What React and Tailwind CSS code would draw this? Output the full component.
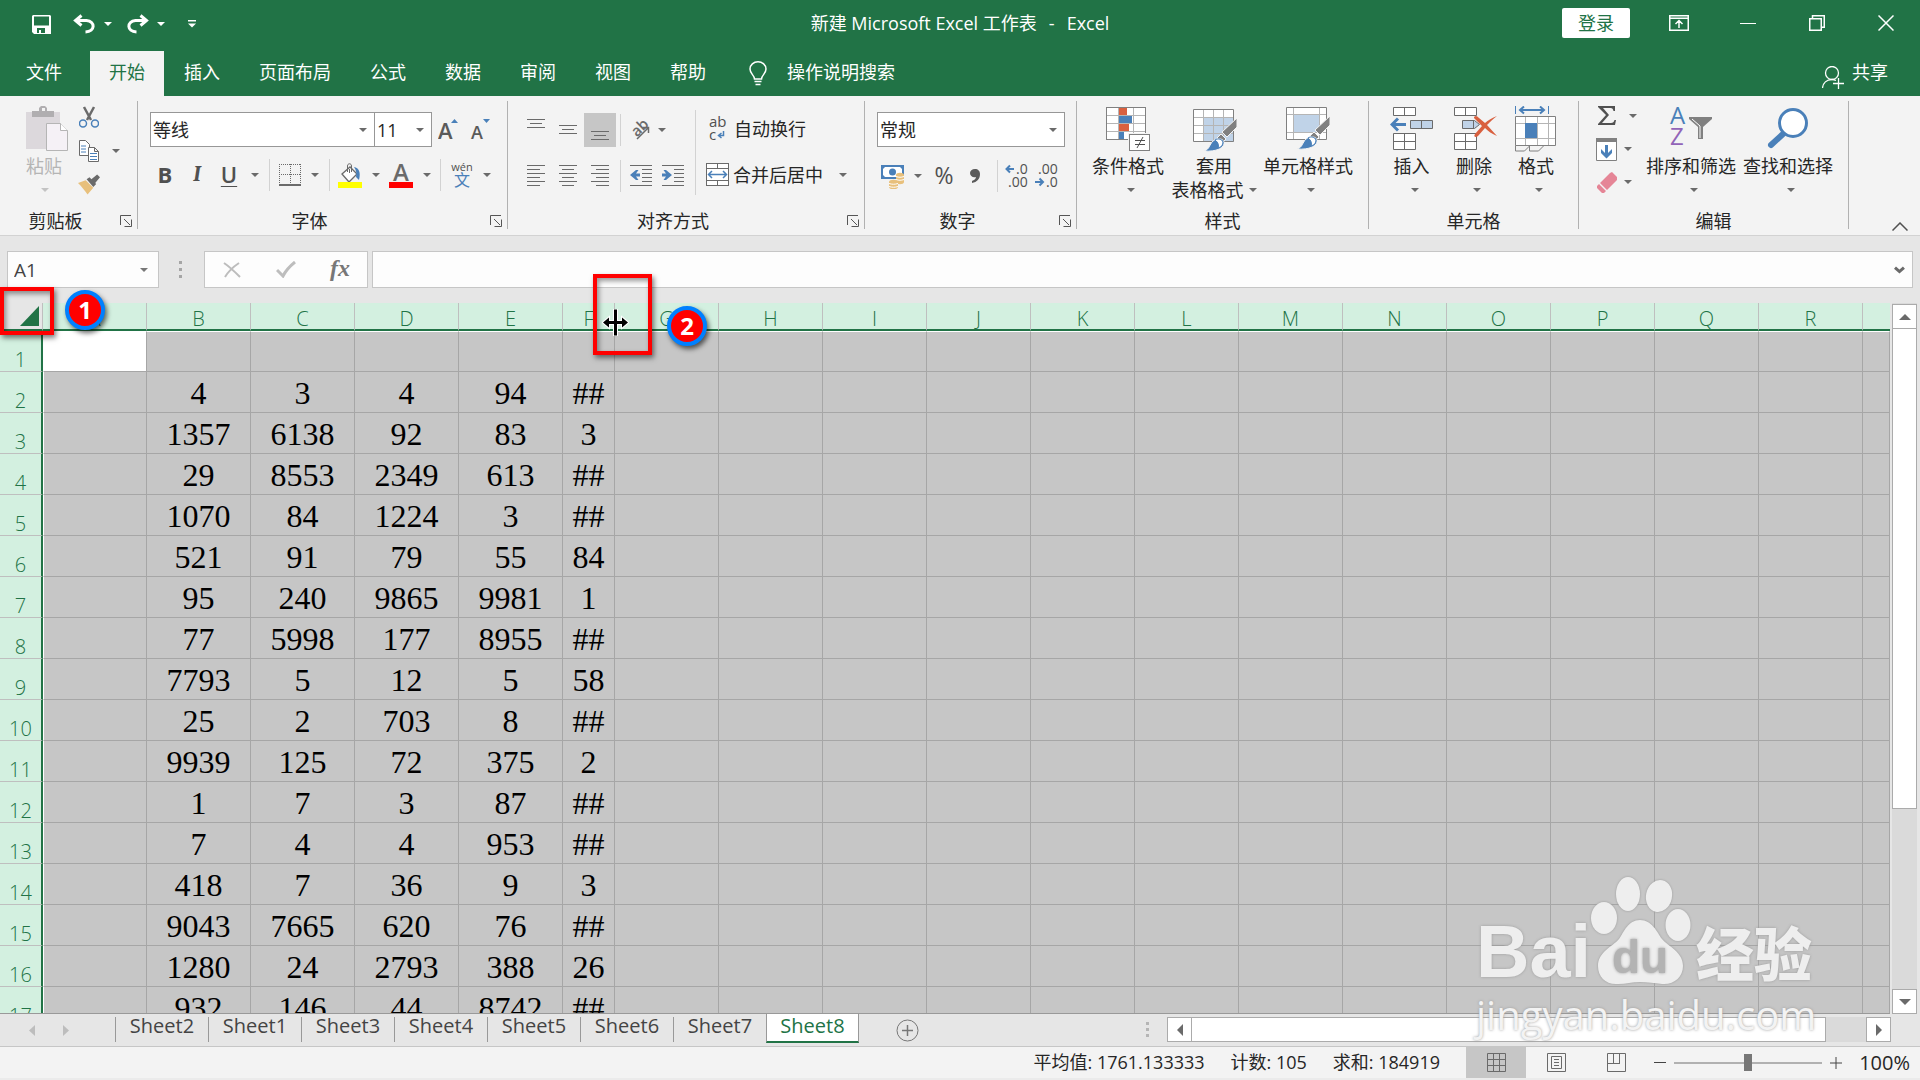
import React, { useState } from "react";
import clsx from "clsx";

const tabs = ["开始", "插入", "页面布局", "公式", "数据", "审阅", "视图", "帮助"];

const sheets = [
  "Sheet2",
  "Sheet1",
  "Sheet3",
  "Sheet4",
  "Sheet5",
  "Sheet6",
  "Sheet7",
  "Sheet8",
];

const columns = "ABCDEFGHIJKLMNOPQR".split("");

const rows = [
  [],
  ["4", "3", "4", "94", "##"],
  ["1357", "6138", "92", "83", "3"],
  ["29", "8553", "2349", "613", "##"],
  ["1070", "84", "1224", "3", "##"],
  ["521", "91", "79", "55", "84"],
  ["95", "240", "9865", "9981", "1"],
  ["77", "5998", "177", "8955", "##"],
  ["7793", "5", "12", "5", "58"],
  ["25", "2", "703", "8", "##"],
  ["9939", "125", "72", "375", "2"],
  ["1", "7", "3", "87", "##"],
  ["7", "4", "4", "953", "##"],
  ["418", "7", "36", "9", "3"],
  ["9043", "7665", "620", "76", "##"],
  ["1280", "24", "2793", "388", "26"],
  ["932", "146", "44", "8742", "##"],
];

const Arrow = ({ className = "text-[#6a6a6a]" }) => (
  <svg
    width="8"
    height="4"
    viewBox="0 0 8 4"
    fill="currentColor"
    className={clsx("shrink-0", className)}
  >
    <path d="M0 0h8L4 4z" />
  </svg>
);

const Tool = ({ label, className, children }) => (
  <button
    type="button"
    aria-label={label}
    className={clsx("flex shrink-0 items-center justify-center", className)}
  >
    {children}
  </button>
);

const Drop = ({ label, className = "w-5" }) => (
  <Tool label={label} className={clsx("h-8", className)}>
    <Arrow />
  </Tool>
);

const Divider = () => <span className="h-8 w-px shrink-0 bg-[#d2d2d2]" />;

const Group = ({ title, launcher, className, children }) => (
  <section
    className={clsx(
      "flex h-32 shrink-0 flex-col border-r border-[#b1b1b1]",
      className
    )}
  >
    <div className="flex min-h-0 flex-1">{children}</div>
    <div className="flex h-4 items-center">
      <h2 className="flex-1 text-center leading-4">{title}</h2>
      {launcher && (
        <Tool label={`${title}设置`} className="w-[26px] pl-1">
          <svg width="12" height="12" viewBox="0 0 12 12" fill="none" stroke="#555">
            <path d="M.5 10V.5H11M4 4l6 6M11.500 4.500v7h-7" />
          </svg>
        </Tool>
      )}
    </div>
  </section>
);

const BigButton = ({ icon, label, second, className }) => (
  <button
    type="button"
    className={clsx("flex shrink-0 flex-col items-center pt-[5px]", className)}
  >
    <span className="flex h-[46px] items-start justify-center">{icon}</span>
    <span className="mt-[2px] leading-6 whitespace-nowrap">{label}</span>
    <span
      className={clsx(
        "flex h-6 items-center gap-[5px] leading-6 whitespace-nowrap",
        !second && "pl-[6px]"
      )}
    >
      {second}
      <Arrow />
    </span>
  </button>
);

const Combo = ({ label, value, className }) => (
  <label
    className={clsx(
      "relative flex h-[35px] items-center border border-[#979797] bg-white",
      className
    )}
  >
    <span className="sr-only">{label}</span>
    <select className="h-full w-full appearance-none bg-transparent pl-[2px] outline-none">
      <option>{value}</option>
    </select>
    <Arrow className="pointer-events-none absolute right-[7px] text-[#6a6a6a]" />
  </label>
);

// horizontal rules, each one [x1, x2, y]
const Lines = ({ lines, width = 20, height = 24, children }) => (
  <svg
    width={width}
    height={height}
    viewBox={`0 0 ${width} ${height}`}
    shapeRendering="crispEdges"
    stroke="#6a6a6a"
    fill="none"
  >
    {lines.map(([a, b, y]) => (
      <path key={`${a}-${y}`} d={`M${a} ${y}.5H${b}`} />
    ))}
    {children}
  </svg>
);

const leftLines = [[1, 19, 1], [1, 14, 5], [1, 19, 9], [1, 14, 13], [1, 19, 17], [1, 14, 21]];
const centerLines = [[1, 19, 1], [4, 16, 5], [1, 19, 9], [4, 16, 13], [1, 19, 17], [4, 16, 21]];
const rightLines = [[1, 19, 1], [6, 19, 5], [1, 19, 9], [6, 19, 13], [1, 19, 17], [6, 19, 21]];
const indentLines = [[0, 22, 1], [12, 22, 5], [12, 22, 9], [12, 22, 13], [12, 22, 17], [0, 22, 21]];

const Brush = () => (
  <>
    <path d="M44 9v9L34 28l-5-5z" fill="#808080" stroke="#f3f3f3" />
    <path d="M28 25l5 5-4 4-5-5z" fill="#808080" stroke="#f3f3f3" />
    <path
      d="M11 42c6-2 5-6 9-10 4-3 10-3 11 1 1 6-8 10-20 9z"
      fill="#4a80b9"
      stroke="#f3f3f3"
    />
    <path d="M22 31c3-2 7-1 8 2 0 3-2 5-4 6-1-3 0-5-4-8z" fill="#fff" stroke="#4a80b9" />
  </>
);

const TitleBar = () => (
  <header className="grid h-[51px] grid-cols-[1fr_auto_1fr] text-white">
    <div className="flex h-12 items-center pl-8">
      <Tool label="保存">
        <svg width="19" height="19" viewBox="0 0 19 19" fill="currentColor">
          <path
            fillRule="evenodd"
            d="M0 1l1-1h17l1 1v18H2l-2-2zM2 1.500v9h15v-9zM5 13v5h8v-5zM7 15h2v3H7z"
          />
        </svg>
      </Tool>
      <Tool label="撤消" className="ml-[22px]">
        <svg width="23" height="20" viewBox="0 0 23 20" fill="none" stroke="currentColor" strokeWidth="3">
          <path d="M8.500 1.500 2.500 6.500l6 5M3 6.500h10.500c9 1 9 11-1 11.500" />
        </svg>
      </Tool>
      <Tool label="撤消列表" className="w-6">
        <Arrow className="text-white" />
      </Tool>
      <Tool label="恢复" className="ml-[6px]">
        <svg width="23" height="20" viewBox="0 0 23 20" fill="none" stroke="currentColor" strokeWidth="3">
          <path d="M14.500 1.500l6 5-6 5M20 6.500H9.500c-9 1-9 11 1 11.500" />
        </svg>
      </Tool>
      <Tool label="恢复列表" className="w-6">
        <Arrow className="text-white" />
      </Tool>
      <Tool label="自定义快速访问工具栏" className="ml-[15px]">
        <svg width="8" height="8" viewBox="0 0 8 8" fill="currentColor">
          <path d="M0 0h8v1.500H0zM0 3.500h8L4 7.500z" />
        </svg>
      </Tool>
    </div>
    <h1 className="flex h-12 items-center gap-3 pb-[2px]">
      <span>新建 Microsoft Excel 工作表</span>
      <span>-</span>
      <span>Excel</span>
    </h1>
    <div className="flex h-[46px] items-center justify-end">
      <button
        type="button"
        className="mr-[14px] h-[30px] w-[68px] rounded-xs bg-white text-[#217346]"
      >
        登录
      </button>
      <Tool label="功能区显示选项" className="h-full w-[69px]">
        <svg width="20" height="16" viewBox="0 0 20 16" fill="none" stroke="currentColor" strokeWidth="1.500">
          <path d="M.75.75h18.500v14.500H.75zM1 3.250h18M10 13V6M6.500 9 10 5.500 13.500 9" />
        </svg>
      </Tool>
      <Tool label="最小化" className="h-full w-[69px]">
        <span className="h-px w-4 bg-white" />
      </Tool>
      <Tool label="还原" className="h-full w-[69px]">
        <svg width="16" height="16" viewBox="0 0 16 16" fill="none" stroke="currentColor" strokeWidth="1.500">
          <path d="M.75 3.750h11.500v11.500H.75zM3.500 3.500V.75h11.750v11.500H12.500" />
        </svg>
      </Tool>
      <Tool label="关闭" className="h-full w-[69px]">
        <svg width="16" height="16" viewBox="0 0 16 16" fill="none" stroke="currentColor" strokeWidth="1.500">
          <path d="M.5.5l15 15M15.500.5l-15 15" />
        </svg>
      </Tool>
    </div>
  </header>
);

const TabBar = () => (
  <nav className="flex h-[45px] items-stretch gap-px pr-8 text-white">
    <button type="button" className="pr-[27px] pb-1 pl-[26px]">
      文件
    </button>
    {tabs.map((t, i) => (
      <button
        key={t}
        type="button"
        className={clsx("px-[19px] pb-1", i === 0 && "bg-[#f3f3f3] text-[#217346]")}
      >
        {t}
      </button>
    ))}
    <label className="ml-[23px] flex flex-1 items-center gap-5">
      <svg width="18" height="25" viewBox="0 0 18 25" fill="none" stroke="currentColor" strokeWidth="1.500">
        <path d="M5.500 18c0-4-4.500-5-4.500-10a8 7.250 0 0 1 16 0c0 5-4.500 6-4.500 10zM5.500 20.500h7M6.500 23.500h5" />
      </svg>
      <input
        aria-label="操作说明搜索"
        placeholder="操作说明搜索"
        className="w-48 bg-transparent pb-1 outline-none placeholder:text-white"
      />
    </label>
    <button type="button" className="flex items-center gap-2">
      <svg width="22" height="23" viewBox="0 0 22 23" fill="none" stroke="currentColor" strokeWidth="1.300" className="mt-2">
        <circle cx="10" cy="7" r="6.500" />
        <path d="M.5 22c.5-5 4-8.500 9.500-8.500 2 0 3 .5 4 1M16.500 12v11M11 17.500h11" />
      </svg>
      <span className="pb-1">共享</span>
    </button>
  </nav>
);

const Clipboard = () => (
  <Group title="剪贴板" launcher className="w-[138px]">
    <button type="button" className="ml-6 flex w-[42px] flex-col items-center pt-[5px] text-[#b5b5b5]">
      <svg width="42" height="46" viewBox="0 0 42 46" className="ml-1">
        <path d="M0 6h34v37H0z" fill="#dcd8dc" />
        <path d="M6 11V5h7V2l2-2h4l2 2v3h7v6zM16 2v3h3V2z" fill="#b0aeb0" />
        <path d="M20.500 17.500h14l7 7v20h-21z" fill="#f5f1f6" stroke="#b5b5b5" />
        <path d="M34.500 17.500v7h7" fill="#fff" stroke="#b5b5b5" />
      </svg>
      <span className="mt-[2px] pr-[2px] leading-6">粘贴</span>
      <span className="flex h-6 items-center">
        <Arrow className="text-[#c3c3c3]" />
      </span>
    </button>
    <div className="ml-3 flex flex-col gap-3 pt-[5px]">
      <Tool label="剪切" className="w-[22px]">
        <svg width="20" height="22" viewBox="0 0 20 22" fill="none">
          <path d="M5 1l7 13M15 1L8 14" stroke="#6a6a6a" strokeWidth="2.500" />
          <circle cx="4" cy="17.500" r="3.500" stroke="#4a80b9" strokeWidth="1.500" />
          <circle cx="16" cy="17.500" r="3.500" stroke="#4a80b9" strokeWidth="1.500" />
        </svg>
      </Tool>
      <div className="flex items-center">
        <Tool label="复制" className="w-[22px]">
          <svg width="20" height="22" viewBox="0 0 20 22" fill="#fff" stroke="#6a6a6a">
            <path d="M.5.5h6l4 4v11H.5z" />
            <path d="M2 6h5M2 9h5M2 12h5" stroke="#4a80b9" />
            <path d="M9.500 7.500h6l4 4v10h-10zM15.500 7.500v4h4" />
            <path d="M11 13.500h7M11 16.500h7M11 19.500h7" stroke="#4a80b9" />
          </svg>
        </Tool>
        <Tool label="复制选项" className="ml-[6px] w-5">
          <Arrow />
        </Tool>
      </div>
      <Tool label="格式刷" className="w-[22px]">
        <svg width="23" height="21" viewBox="0 0 23 21">
          <path d="M0 9l8-3 8 8-6 7c-3-4-6-8-10-12z" fill="#e8c07c" />
          <path d="M9 5l3-2 7 7-3 3zM14 5l6-5 3 3-5 6z" fill="#6a6a6a" />
        </svg>
      </Tool>
    </div>
  </Group>
);

const FontGroup = () => (
  <Group title="字体" launcher className="w-[370px]">
    <div className="flex flex-col gap-3 pt-[11px] pl-[11px]">
      <div className="flex pl-px">
        <Combo label="字体" value="等线" className="w-[225px]" />
        <Combo label="字号" value="11" className="-ml-px w-[58px]" />
        <Tool label="增大字号" className="ml-[6px] w-5">
          <svg width="20" height="24" viewBox="0 0 20 24">
            <text x="0" y="21" fontSize="22" fontWeight="600" fill="#5a5a5a">A</text>
            <path d="M13 5l3.500-4L20 5z" fill="#4a80b9" />
          </svg>
        </Tool>
        <Tool label="减小字号" className="ml-3 w-5">
          <svg width="20" height="24" viewBox="0 0 20 24">
            <text x="1" y="21" fontSize="18" fontWeight="600" fill="#5a5a5a">A</text>
            <path d="M13 1h7l-3.500 4z" fill="#4a80b9" />
          </svg>
        </Tool>
      </div>
      <div className="flex items-center text-[22px] text-[#505050]">
        <Tool label="加粗" className="h-8 w-8 pb-[2px] font-bold">B</Tool>
        <Tool label="倾斜" className="h-8 w-8 pb-[2px] font-serif font-bold italic">I</Tool>
        <Tool label="下划线" className="h-8 w-8 pb-[2px] font-semibold underline decoration-1 underline-offset-3">U</Tool>
        <Drop label="下划线选项" />
        <span className="w-1" />
        <Divider />
        <Tool label="边框" className="ml-2 w-[23px]">
          <svg width="22" height="22" viewBox="0 0 22 22" fill="none" stroke="#6a6a6a" shapeRendering="crispEdges">
            <path d="M.5 0v21M21.500 0v21M11.500 0v21M0 .5h22M0 10.500h22" strokeDasharray="1 1" />
            <path d="M0 21h22" strokeWidth="2" />
          </svg>
        </Tool>
        <Drop label="边框选项" className="w-7" />
        <Divider />
        <Tool label="填充颜色" className="ml-2 w-6">
          <svg width="24" height="25" viewBox="0 0 24 25">
            <path d="M4 11l8-7 7 7-8 8z" fill="#fff" stroke="#6a6a6a" strokeWidth="1.300" />
            <path d="M9.500 9V3c0-3 4-3 4 0v6M11.500 6v4" fill="none" stroke="#6a6a6a" />
            <path d="M16 4c5 1 7 5 5 13l-3-3c1-4 0-7-2-10z" fill="#4a80b9" />
            <path d="M0 19h24v6H0z" fill="#ff0" />
          </svg>
        </Tool>
        <Drop label="填充颜色选项" className="w-[27px]" />
        <Tool label="字体颜色" className="w-6">
          <svg width="24" height="25" viewBox="0 0 24 25">
            <text x="4" y="18" fontSize="24" fontWeight="600" fill="#6a6a6a">A</text>
            <path d="M0 19h24v6H0z" fill="#f00" />
          </svg>
        </Tool>
        <Drop label="字体颜色选项" className="w-[27px]" />
        <Divider />
        <Tool label="拼音" className="ml-2 w-[26px]">
          <svg width="24" height="26" viewBox="0 0 24 26" textAnchor="middle">
            <text x="12" y="9" fontSize="11" fill="#505050">wén</text>
            <text x="12" y="24" fontSize="16" fill="#4a80b9">文</text>
          </svg>
        </Tool>
        <Drop label="拼音选项" className="w-6" />
      </div>
    </div>
  </Group>
);

const AlignGroup = () => (
  <Group title="对齐方式" launcher className="w-[357px]">
    <div className="flex w-[187px] flex-col gap-3 pt-3 pl-3">
      <div className="flex h-[34px] items-center">
        <Tool label="顶端对齐" className="h-full w-8">
          <Lines lines={[[1, 19, 1], [4, 16, 5], [1, 19, 9]]} />
        </Tool>
        <Tool label="垂直居中" className="h-full w-8">
          <Lines lines={[[1, 19, 7], [4, 16, 11], [1, 19, 15]]} />
        </Tool>
        <Tool label="底端对齐" className="h-full w-8 bg-[#c6c6c6]">
          <Lines lines={[[1, 19, 13], [4, 16, 17], [1, 19, 21]]} />
        </Tool>
        <span className="w-1" />
        <Divider />
        <Tool label="方向" className="ml-2 w-[22px]">
          <svg width="22" height="22" viewBox="0 0 22 22" fill="none" stroke="#6a6a6a" strokeWidth="1.500">
            <text x="-9" y="6" fontSize="15" fontWeight="600" fill="#6a6a6a" stroke="none" transform="translate(10 8) rotate(-45)">ab</text>
            <path d="M8 20 19 9M14 8.500h5.500V14" />
          </svg>
        </Tool>
        <Drop label="方向选项" className="w-[22px]" />
      </div>
      <div className="flex h-[34px] items-center">
        <Tool label="左对齐" className="h-full w-8"><Lines lines={leftLines} /></Tool>
        <Tool label="居中" className="h-full w-8"><Lines lines={centerLines} /></Tool>
        <Tool label="右对齐" className="h-full w-8"><Lines lines={rightLines} /></Tool>
        <span className="w-1" />
        <Divider />
        <Tool label="减少缩进量" className="ml-1 h-full w-8">
          <Lines width={22} lines={indentLines}>
            <path d="M0 11l6-5h2.500L6 9.500h4v3H6L8.500 16H6z" fill="#4a80b9" stroke="none" shapeRendering="auto" />
          </Lines>
        </Tool>
        <Tool label="增加缩进量" className="h-full w-8">
          <Lines width={22} lines={indentLines}>
            <path d="M10 11L4 6H1.500L4 9.500H0v3h4L1.500 16H4z" fill="#4a80b9" stroke="none" shapeRendering="auto" />
          </Lines>
        </Tool>
      </div>
    </div>
    <span className="mt-[9px] h-[85px] w-px bg-[#d2d2d2]" />
    <div className="flex flex-col gap-3 pt-[11px] pl-[10px]">
      <button type="button" className="flex h-[34px] items-center gap-[2px] pl-[3px]">
        <svg width="23" height="26" viewBox="0 0 23 26" fill="#505050">
          <text x="0" y="11" fontSize="15">ab</text>
          <text x="0" y="24" fontSize="15">c</text>
          <path d="M14.500 15v4.500H10M12.500 17l-3 2.500 3 2.500" fill="none" stroke="#4a80b9" strokeWidth="1.500" />
        </svg>
        自动换行
      </button>
      <div className="flex h-[34px] items-center">
        <button type="button" className="flex items-center gap-1">
          <svg width="23" height="24" viewBox="0 0 23 24" fill="#fff" stroke="#6a6a6a">
            <path d="M.5.5h22v22H.5zM.5 5.500h22M.5 17.500h22M11.500 0v5M11.500 18v5" shapeRendering="crispEdges" />
            <path d="M3 11.500h17M6 8l-3.500 3.500L6 15M17 8l3.500 3.500L17 15" stroke="#4a80b9" strokeWidth="1.500" fill="none" />
          </svg>
          合并后居中
        </button>
        <Drop label="合并选项" className="ml-[10px] w-5" />
      </div>
    </div>
  </Group>
);

const NumberGroup = () => (
  <Group title="数字" launcher className="w-[212px]">
    <div className="flex flex-col gap-3 pt-[11px] pl-3">
      <Combo label="数字格式" value="常规" className="w-[188px]" />
      <div className="flex h-[34px] items-center pl-1 text-[#505050]">
        <Tool label="会计数字格式" className="w-6">
          <svg width="24" height="25" viewBox="0 0 24 25">
            <path d="M0 1h23v14H0z" fill="#4a80b9" />
            <path d="M2 5l2-2h15l2 2v6l-2 2H4l-2-2z" fill="#fff" />
            <circle cx="11.500" cy="8" r="3.500" fill="#4a80b9" />
            <path d="M15 11c0-3 8-3 8 0v7c0 3-8 3-8 0zM8 18c0-3 9-3 9 0v5c0 3-9 3-9 0z" fill="#e8c07c" />
            <path d="M15 12.500c3 1 5 1 8 0M15 15.500c3 1 5 1 8 0M8 19.500c3 1 6 1 9 0M8 22.500c3 1 6 1 9 0" stroke="#fff" fill="none" />
          </svg>
        </Tool>
        <Drop label="会计数字格式选项" className="w-[26px]" />
        <Tool label="百分比样式" className="w-[26px] pb-[2px] text-[23px]">%</Tool>
        <Tool label="千位分隔样式" className="mr-1 w-9">
          <svg width="10" height="14" viewBox="0 0 10 14" fill="#5a5a5a">
            <path d="M5 0c3 0 5 2 5 5 0 5-3 8-8 9v-2c2-1 4-2 4-4-3 1-6-1-6-4 0-2 2-4 5-4z" />
          </svg>
        </Tool>
        <Divider />
        <Tool label="增加小数位数" className="ml-[6px] w-7">
          <svg width="26" height="26" viewBox="0 0 26 26" fill="#505050" fontSize="14">
            <text x="11" y="11">.0</text>
            <text x="3" y="24">.00</text>
            <path d="M9 6H2M5 2.500L1.500 6 5 9.500" fill="none" stroke="#4a80b9" strokeWidth="2" />
          </svg>
        </Tool>
        <Tool label="减少小数位数" className="w-8">
          <svg width="26" height="26" viewBox="0 0 26 26" fill="#505050" fontSize="14">
            <text x="3" y="11">.00</text>
            <text x="11" y="24">.0</text>
            <path d="M0 19h7M4.500 15.500L8 19l-3.500 3.500" fill="none" stroke="#4a80b9" strokeWidth="2" />
          </svg>
        </Tool>
      </div>
    </div>
  </Group>
);

const StyleGroup = () => (
  <Group title="样式" className="w-[292px]">
    <BigButton
      label="条件格式"
      className="ml-2 w-[86px]"
      icon={
        <svg width="44" height="46" viewBox="0 0 44 46" fill="#fff" shapeRendering="crispEdges">
          <path d="M0.500 1.500h39v32h-39z" />
          <path d="M12.500 1v33M27.500 1v33M0 9.500h40M0 17.500h40M0 25.500h40" stroke="#b5b5b5" />
          <path d="M.5 1.500h39v32H.5z" fill="none" stroke="#808080" />
          <path d="M13 2h8v7h-8zM13 18h10v7H13z" fill="#d9603f" />
          <path d="M13 10h13v7H13zM13 26h5v7h-5z" fill="#4a80b9" />
          <path d="M22 27h22v19H22z" fill="#f3f3f3" />
          <path d="M23.500 28.500h20v16h-20z" stroke="#808080" />
          <path d="M29 34.500h10M29 38.500h10M37 31l-6 11" stroke="#505050" shapeRendering="auto" />
        </svg>
      }
    />
    <BigButton
      label={<span>套用</span>}
      second="表格格式"
      className="w-[86px]"
      icon={
        <svg width="46" height="46" viewBox="0 -3 46 46" fill="#fff" className="ml-1">
          <path d="M.5.5h40v32H.5z" />
          <path d="M10 8h31v25H10z" fill="#c0d3e8" />
          <path d="M10.500 0v33M20.500 0v33M30.500 0v33M0 8.500h41M0 16.500h41M0 24.500h41" stroke="#b5b5b5" />
          <path d="M.5.5h40v32H.5z" fill="none" stroke="#808080" />
          <Brush />
        </svg>
      }
    />
    <BigButton
      label="单元格样式"
      className="ml-[3px] w-24"
      icon={
        <svg width="46" height="46" viewBox="0 -1 46 46" fill="#fff" className="ml-[2px]">
          <path d="M.5.5h40v32H.5z" />
          <path d="M8 7h26v19H8z" fill="#c0d3e8" />
          <path d="M7.500 0v33M33.500 0v33M0 7.500h41M0 25.500h41" stroke="#b5b5b5" />
          <path d="M.5.5h40v32H.5z" fill="none" stroke="#808080" />
          <Brush />
        </svg>
      }
    />
  </Group>
);

const CellGroup = () => (
  <Group title="单元格" className="w-[210px]">
    <BigButton
      label="插入"
      className="ml-[11px] w-[63px]"
      icon={
        <svg width="44" height="46" viewBox="0 -1 44 46" fill="#fff" stroke="#6a6a6a">
          <path d="M3.500.5h22v8h-22zM14.500.5v8M3.500 26.500h22v16h-22zM3.500 34.500h22M14.500 26.500v16" />
          <path d="M20.500 13.500h22v8h-22zM31.500 13.500v8" fill="#c0d3e8" />
          <path d="M16 17.500H2M8 11.500l-6 6 6 6" fill="none" stroke="#4a80b9" strokeWidth="3" />
        </svg>
      }
    />
    <BigButton
      label="删除"
      className="w-[62px]"
      icon={
        <svg width="44" height="46" viewBox="0 -1 44 46" fill="#fff" stroke="#6a6a6a" className="ml-1">
          <path d="M.5.5h22v8H.5zM11.500.5v8M.5 26.500h22v16H.5zM.5 34.500h22M11.500 26.500v16" />
          <path d="M8.500 13.500h12l5 4-5 4h-12zM19.500 13.500v8" fill="#c0d3e8" />
          <path d="M20 10c2-2 3-1 5 1l6 5c3-3 7-5 12-7-4 3-7 6-10 9l10 11c-5-2-9-5-12-8l-7 8c-2 2-5 1-3-2l7-8-7-7c-1-1-1-1-1-2z" fill="#d9603f" stroke="none" />
        </svg>
      }
    />
    <BigButton
      label="格式"
      className="w-[62px]"
      icon={
        <svg width="42" height="46" viewBox="0 0 42 46" fill="#fff">
          <path d="M.5 10.500h40v29H.5z" />
          <path d="M10.500 10v30M22.500 10v30M33.500 10v30M0 17.500h41M0 32.500h41" stroke="#b5b5b5" />
          <path d="M.5 39.500v5.500h9l5-5M14.500 40v5h9l5-5M.5 10.500h40v29H.5z" fill="none" stroke="#808080" />
          <path d="M10 17h12v15H10z" fill="#4a80b9" />
          <path d="M.5 0v8M33.500 0v8" stroke="#4a80b9" />
          <path d="M5 4h24M9 .5L5 4l4 3.500M25 .5L29 4l-4 3.500" stroke="#4a80b9" strokeWidth="2" fill="none" />
        </svg>
      }
    />
  </Group>
);

const EditGroup = () => (
  <Group title="编辑" className="w-[270px]">
    <div className="ml-[17px] flex w-[46px] flex-col gap-[10px] pt-1">
      <div className="flex h-[22px] items-center justify-between">
        <Tool label="自动求和">
          <svg width="22" height="20" viewBox="-2 0 22 20" fill="#505050">
            <path d="M0 0h17v5h-1.500c-.5-2-1-3-3-3H5l6 7-7 8h9c2 0 3-1 3.500-3H18l-1 5H0v-1l8-9-8-8z" />
          </svg>
        </Tool>
        <Tool label="求和选项" className="w-[18px]"><Arrow /></Tool>
      </div>
      <div className="flex h-6 items-center gap-[2px]">
        <Tool label="填充">
          <svg width="22" height="23" viewBox="0 0 22 23">
            <path d="M.5.5h20v22H.5z" fill="#fff" stroke="#808080" />
            <path d="M0 0h21v4H0z" fill="#808080" />
            <path d="M9 7h3v8l4-4v4l-5.500 5.500L5 15v-4l4 4z" fill="#4a80b9" />
          </svg>
        </Tool>
        <Tool label="填充选项" className="w-4"><Arrow /></Tool>
      </div>
      <div className="flex h-[22px] items-center gap-[2px]">
        <Tool label="清除">
          <svg width="22" height="21" viewBox="0 0 22 21" fill="#e58596">
            <path d="M4 11L14 1l2-1 5 5v3L11 18zM3 12l7 7-2 2H6l-5-5v-2z" />
          </svg>
        </Tool>
        <Tool label="清除选项" className="w-4"><Arrow /></Tool>
      </div>
    </div>
    <BigButton
      label="排序和筛选"
      className="w-[98px]"
      icon={
        <svg width="44" height="46" viewBox="0 0 44 46" fontSize="24">
          <text x="1" y="18" fill="#4a80b9">A</text>
          <text x="1" y="39" fill="#9264b8">Z</text>
          <path d="M20 11h23v2l-9 8v12h-5V21l-9-8z" fill="#808080" />
          <path d="M23 13l8 7v12" stroke="#fff" fill="none" />
        </svg>
      }
    />
    <BigButton
      label="查找和选择"
      className="w-[96px]"
      icon={
        <svg width="42" height="46" viewBox="0 0 42 46">
          <path d="M16 28L4 39" stroke="#4a80b9" strokeWidth="6" strokeLinecap="round" />
          <circle cx="26" cy="17" r="13.500" fill="#fff" stroke="#4a80b9" strokeWidth="3" />
        </svg>
      }
    />
  </Group>
);

const Ribbon = () => (
  <div className="flex h-[140px] border-b border-[#d2d2d2] bg-[#f3f3f3] pt-[5px] text-[#262626]">
    <Clipboard />
    <FontGroup />
    <AlignGroup />
    <NumberGroup />
    <StyleGroup />
    <CellGroup />
    <EditGroup />
    <div className="flex flex-1 items-end justify-end pr-3 pb-1">
      <Tool label="折叠功能区">
        <svg width="16" height="9" viewBox="0 0 16 9" fill="none" stroke="#505050" strokeWidth="1.500">
          <path d="M.5 8.500L8 1l7.500 7.500" />
        </svg>
      </Tool>
    </div>
  </div>
);

const FormulaBar = () => (
  <div className="flex h-[67px] items-center pr-[7px] pl-[7px] text-[#444]">
    <label className="relative flex h-[37px] w-[152px] items-center border border-[#c6c6c6] bg-[#fdfdfd]">
      <input
        aria-label="名称框"
        defaultValue="A1"
        className="w-full bg-transparent pl-[6px] text-[19px] outline-none"
      />
      <Arrow className="pointer-events-none absolute right-[10px] text-[#777]" />
    </label>
    <span className="flex w-[45px] flex-col items-center gap-1 pr-[2px]">
      <i className="size-[3px] bg-[#a5a5a5]" />
      <i className="size-[3px] bg-[#a5a5a5]" />
      <i className="size-[3px] bg-[#a5a5a5]" />
    </span>
    <div className="flex h-[37px] w-[164px] items-center border border-[#c6c6c6] bg-[#fdfdfd]">
      <Tool label="取消" className="h-full w-[54px]">
        <svg width="18" height="16" viewBox="0 0 18 16" fill="none" stroke="#bdbdbd" strokeWidth="2">
          <path d="M1 1c6 4 11 9 16 14M16 1C10 5 5 10 2 15" />
        </svg>
      </Tool>
      <Tool label="输入" className="h-full w-[54px]">
        <svg width="20" height="17" viewBox="0 0 20 17" fill="none" stroke="#bdbdbd" strokeWidth="3">
          <path d="M1 9l6 6C10 9 14 5 19 1" />
        </svg>
      </Tool>
      <Tool
        label="插入函数"
        className="h-full w-[54px] pb-1 font-[Liberation_Serif,serif] text-2xl font-bold text-[#777] italic"
      >
        fx
      </Tool>
    </div>
    <label className="ml-1 flex h-[37px] flex-1 items-center border border-[#c6c6c6] bg-[#fdfdfd] pr-[7px]">
      <input aria-label="编辑栏" className="w-full bg-transparent px-2 outline-none" />
      <svg width="11" height="8" viewBox="0 0 11 8" fill="none" stroke="#6a6a6a" strokeWidth="3">
        <path d="M1 1.500l4.500 4 4.500-4" />
      </svg>
    </label>
  </div>
);

const Grid = () => (
  <table className="w-full table-fixed border-separate border-spacing-0">
    <colgroup>
      <col className="w-[43px]" />
      {columns.map((c) => (
        <col key={c} className={c === "F" ? "w-[52px]" : "w-[104px]"} />
      ))}
      <col />
    </colgroup>
    <thead>
      <tr className="h-7 text-xl leading-5 text-[#217346]">
        <th scope="col" aria-label="全选" className="border-r border-b-2 border-r-[#bfbfbf] border-b-[#217346] p-0">
          <svg width="20" height="20" viewBox="0 0 20 20" className="ml-5">
            <path d="M19 0v20H0z" fill="#217346" />
          </svg>
        </th>
        {columns.map((c) => (
          <th
            key={c}
            scope="col"
            className="border-r border-b-2 border-r-[#bfbfbf] border-b-[#217346] bg-[#d3f0e0] p-0 pt-[6px] font-light"
          >
            {c}
          </th>
        ))}
        <th className="border-b-2 border-[#217346] bg-[#d3f0e0] p-0" />
      </tr>
    </thead>
    <tbody>
      {rows.map((row, r) => (
        <tr key={r} className="h-[41px]">
          <th
            scope="row"
            className="border-r-2 border-b border-r-[#217346] border-b-[#bfbfbf] bg-[#d3f0e0] p-0 align-bottom text-xl leading-[22px] font-light text-[#217346]"
          >
            {r + 1}
          </th>
          {[...columns, ""].map((c, i) => (
            <td
              key={c}
              className={clsx(
                "border-r border-b border-[#a6a6a6] p-0 pt-[2px] text-center font-[Liberation_Serif,serif] text-[32px] leading-9 text-black",
                r === 0 && "border-t border-t-white",
                i === 0 && "border-l border-l-white",
                r === 0 && i === 0 ? "bg-white" : "bg-[#c6c6c6]"
              )}
            >
              {i > 0 && row[i - 1]}
            </td>
          ))}
        </tr>
      ))}
    </tbody>
  </table>
);

const ScrollButton = ({ label, d }) => (
  <button
    type="button"
    aria-label={label}
    className="flex size-[25px] shrink-0 items-center justify-center border border-[#ababab] bg-white"
  >
    <svg width="12" height="12" viewBox="0 0 12 12" fill="#6a6a6a">
      <path d={d} />
    </svg>
  </button>
);

const SheetBar = ({ active, onSelect }) => (
  <div className="flex h-8 shrink-0 items-start pr-[29px]">
    <div className="flex h-8 w-[115px] items-center gap-7 pl-[29px]">
      <Tool label="上一个工作表">
        <svg width="6" height="11" viewBox="0 0 6 11" fill="#bdbdbd"><path d="M6 0v11L0 5.500z" /></svg>
      </Tool>
      <Tool label="下一个工作表">
        <svg width="6" height="11" viewBox="0 0 6 11" fill="#bdbdbd"><path d="M0 0v11l6-5.500z" /></svg>
      </Tool>
    </div>
    {sheets.map((s) => (
      <button
        key={s}
        type="button"
        onClick={() => onSelect(s)}
        className={clsx(
          "flex w-[93px] justify-center text-xl leading-6",
          s === active
            ? "h-[29px] border-x border-b-2 border-x-[#999] border-b-[#217346] bg-white text-[#217346]"
            : "mt-[3px] h-[25px] border-l border-[#999] text-[#444]"
        )}
      >
        <span className={s === active ? "" : "-mt-[3px]"}>{s}</span>
      </button>
    ))}
    <Tool label="新工作表" className="ml-[37px] h-8">
      <svg width="23" height="23" viewBox="0 0 23 23" fill="none" stroke="#777">
        <circle cx="11.500" cy="11.500" r="10.500" />
        <path d="M11.500 6v11M6 11.500h11" strokeWidth="1.500" />
      </svg>
    </Tool>
    <span className="mt-2 mr-[18px] ml-auto flex flex-col gap-[3px]">
      <i className="size-[3px] bg-[#b5b5b5]" />
      <i className="size-[3px] bg-[#b5b5b5]" />
      <i className="size-[3px] bg-[#b5b5b5]" />
    </span>
    <div className="mt-[3px] flex w-[39%] max-w-[724px] bg-[#dadada]">
      <ScrollButton label="向左滚动" d="M9 0v12L3 6z" />
      <span className="-ml-px flex-[16] border border-[#ababab] bg-white" />
      <span className="flex-1" />
      <ScrollButton label="向右滚动" d="M3 0v12l6-6z" />
    </div>
  </div>
);

const StatusBar = () => (
  <footer className="flex h-[34px] shrink-0 items-stretch justify-end border-t border-b-2 border-t-[#c6c6c6] border-b-[#ebebeb] bg-[#f3f3f3] pr-[10px] text-[#262626]">
    <div className="flex items-center gap-[26px] pr-[26px] pb-[2px]">
      <span>平均值: 1761.133333</span>
      <span>计数: 105</span>
      <span>求和: 184919</span>
    </div>
    <Tool label="普通" className="w-[60px] bg-[#c6c6c6]">
      <svg width="19" height="19" viewBox="0 0 19 19" fill="none" stroke="#6a6a6a">
        <path d="M.5.5h18v18H.5zM6.500 0v19M12.500 0v19M0 6.500h19M0 12.500h19" />
      </svg>
    </Tool>
    <Tool label="页面布局" className="w-[60px]">
      <svg width="19" height="19" viewBox="0 0 19 19" fill="none" stroke="#6a6a6a">
        <path d="M.5.5h18v18H.5zM4.500 3.500h10v12h-10zM7 6.500h5M7 9.500h5M7 12.500h5" />
      </svg>
    </Tool>
    <Tool label="分页预览" className="w-[60px]">
      <svg width="19" height="19" viewBox="0 0 19 19" fill="none" stroke="#6a6a6a">
        <path d="M.5.5h18v18H.5zM6.500 0v10M12.500 0v10M0 10.500h13" />
      </svg>
    </Tool>
    <Tool label="缩小" className="w-7">
      <span className="h-px w-3 bg-[#444]" />
    </Tool>
    <input
      type="range"
      aria-label="显示比例"
      min="0"
      max="200"
      defaultValue="100"
      className="my-auto h-[2px] w-[148px] appearance-none bg-[#b1b1b1] [&::-webkit-slider-thumb]:h-[17px] [&::-webkit-slider-thumb]:w-2 [&::-webkit-slider-thumb]:appearance-none [&::-webkit-slider-thumb]:bg-[#777]"
    />
    <Tool label="放大" className="w-7">
      <svg width="12" height="12" viewBox="0 0 12 12" stroke="#444">
        <path d="M6 0v12M0 6h12" />
      </svg>
    </Tool>
    <button type="button" className="w-[60px] text-right text-xl">
      100%
    </button>
  </footer>
);

const Badge = ({ n, className }) => (
  <span
    className={clsx(
      "absolute flex size-10 items-center justify-center rounded-full border-4 border-[#0080ff] bg-[#f00] text-2xl font-bold text-white shadow-[2px_3px_5px_rgba(0,0,0,0.6)]",
      className
    )}
  >
    {n}
  </span>
);

const Mark = ({ className }) => (
  <span
    className={clsx(
      "absolute border-4 border-[#f00] shadow-[2px_3px_5px_rgba(0,0,0,0.5),inset_2px_3px_5px_rgba(0,0,0,0.4)]",
      className
    )}
  />
);

const Watermark = () => (
  <div className="pointer-events-none absolute right-[96px] bottom-10 flex w-[348px] flex-col text-[#eeeeee] [text-shadow:0_0_3px_#999]">
    <div className="flex h-[114px] items-end pb-1">
      <span className="w-[114px] font-[Liberation_Sans,sans-serif] text-[74px] leading-[68px] font-bold">
        Bai
      </span>
      <svg width="102" height="110" viewBox="0 0 102 110" fill="#eee" className="drop-shadow-[0_0_1px_#999]">
        <ellipse cx="14" cy="42" rx="13" ry="16" />
        <ellipse cx="38" cy="18" rx="12" ry="17" />
        <ellipse cx="69" cy="20" rx="13" ry="16" transform="rotate(12 69 20)" />
        <ellipse cx="88" cy="49" rx="12.500" ry="16" />
        <path d="M50 44c12 0 17 12 22 19 7 8 21 13 21 27 0 11-9 19-21 18-8-1-14-2-22-2s-14 2-22 2C16 109 8 101 8 90c0-14 14-19 21-27 5-7 9-19 21-19z" />
        <text x="22" y="97" fontSize="46" fontWeight="700" fill="#b3b3b3" fontFamily="Liberation Sans, sans-serif">
          du
        </text>
      </svg>
      <span className="ml-1 text-[58px] leading-[64px] font-black">经验</span>
    </div>
    <span className="text-[40px] leading-[50px] font-normal text-[#f3f3f3]">jingyan.baidu.com</span>
  </div>
);

const App = () => {
  const [active, setActive] = useState("Sheet8");

  return (
    <div className="relative flex h-screen flex-col overflow-hidden bg-[#e6e6e6] font-['Open_Sans','Noto_Sans_CJK_SC',sans-serif] text-lg leading-6">
      <div className="bg-[#217346]">
        <TitleBar />
        <TabBar />
      </div>
      <Ribbon />
      <FormulaBar />
      <main className="flex min-h-0 flex-1 pr-[3px]">
        <div className="min-w-0 flex-1 overflow-hidden border-b border-[#999]">
          <Grid />
        </div>
        <div className="ml-[2px] flex w-[25px] flex-col bg-[#dadada] pt-px">
          <ScrollButton label="向上滚动" d="M0 9h12L6 3z" />
          <span className="-mt-px flex-[8] border border-[#ababab] bg-white" />
          <span className="flex-[3]" />
          <ScrollButton label="向下滚动" d="M0 3h12L6 9z" />
        </div>
      </main>
      <SheetBar active={active} onSelect={setActive} />
      <StatusBar />

      <Mark className="top-[287px] left-0 h-12 w-[54px]" />
      <Badge n={1} className="top-[290px] left-[65px]" />
      <Mark className="top-[274px] left-[593px] h-[81px] w-[59px]" />
      <Badge n={2} className="top-[306px] left-[667px]" />
      <svg width="27" height="27" viewBox="0 0 27 27" className="absolute top-[309px] left-[602px]">
        <path
          d="M12 .5h3v11.500h5V8.500l6 5-6 5V15h-5v11.500h-3V15H7v3.500l-6-5 6-5V12h5z"
          fill="#000"
          stroke="#fff"
          strokeWidth="2"
          paintOrder="stroke"
        />
      </svg>
      <Watermark />
    </div>
  );
};

export default App;
